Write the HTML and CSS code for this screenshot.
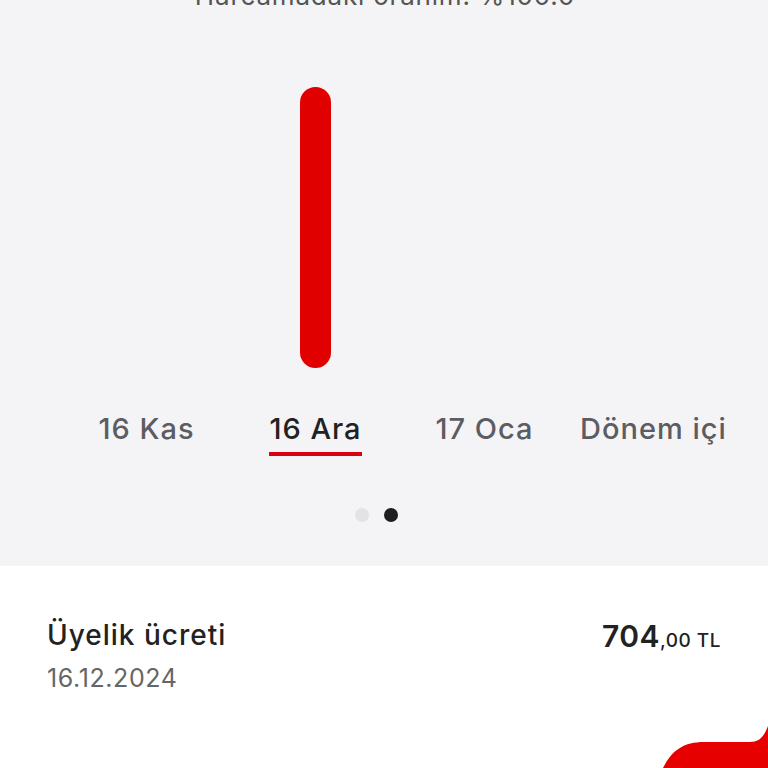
FILE: index.html
```html
<!DOCTYPE html>
<html lang="tr">
<head>
    <meta charset="UTF-8">
    <meta name="viewport" content="width=device-width, initial-scale=1.0">
    <title>Harcama</title>
    <link rel="stylesheet" href="styles.css">
</head>
<body>
    <section class="summary">
        <p class="ratio">Harcamadaki oranım: %100.0</p>

        <div class="chart">
            <div class="col"><div class="bar-slot"></div><span class="label">16 Kas</span></div>
            <div class="col active"><div class="bar-slot"><div class="bar"></div></div><span class="label">16 Ara</span></div>
            <div class="col"><div class="bar-slot"></div><span class="label">17 Oca</span></div>
            <div class="col"><div class="bar-slot"></div><span class="label">Dönem içi</span></div>
        </div>

        <div class="dots">
            <span class="dot"></span>
            <span class="dot current"></span>
        </div>
    </section>

    <section class="items">
        <div class="item">
            <div class="item-info">
                <h2>Üyelik ücreti</h2>
                <p>16.12.2024</p>
            </div>
            <div class="amount">704<small>,00 TL</small></div>
        </div>
    </section>

    <svg class="fab" width="110" height="60" viewBox="0 0 110 60">
        <path d="M5 60 C13 44 24 34 46 34 L92 34 C102 34 106 28 110 18 L110 60 Z" fill="#e60000"/>
    </svg>
</body>
</html>
```

FILE: styles.css
```css
body {
    margin: 0;
    padding: 0;
    font-family: Inter, "Open Sans", sans-serif;
    background-color: #fff;
    color: #222;
    height: 768px;
    overflow: hidden;
    position: relative;
}

.summary {
    background-color: #f4f4f6;
    height: 566px;
    overflow: hidden;
}

.ratio {
    margin: -20px 0 0;
    text-align: center;
    font-size: 26px;
    letter-spacing: 0.8px;
    color: #555;
    padding-left: 2px;
}

.chart {
    display: grid;
    grid-template-columns: repeat(4, 169px);
    padding-left: 62px;
    margin-top: 76px;
}

.col {
    display: flex;
    flex-direction: column;
    align-items: center;
}

.bar-slot {
    height: 281px;
    display: flex;
    align-items: flex-end;
}

.bar {
    width: 31px;
    height: 281px;
    border-radius: 16px;
    background-color: #e00000;
}

.label {
    margin-top: 43px;
    font-size: 29px;
    letter-spacing: 1px;
    font-weight: 500;
    color: #5c5c62;
    padding-bottom: 6px;
    border-bottom: 4px solid transparent;
    white-space: nowrap;
}

.col.active .label {
    color: #222;
    border-bottom-color: #d90012;
}

.dots {
    display: flex;
    justify-content: center;
    gap: 15px;
    margin-top: 52px;
    padding-right: 16px;
}

.dot {
    width: 14px;
    height: 14px;
    border-radius: 50%;
    background-color: #e3e3e6;
}

.dot.current {
    background-color: #1e1e1e;
}

.items {
    padding: 52px 47px 0 47px;
}

.item {
    display: flex;
    justify-content: space-between;
    align-items: flex-start;
}

.item-info h2 {
    margin: 0;
    font-size: 28px;
    letter-spacing: 1px;
    font-weight: 500;
    color: #222;
}

.item-info p {
    margin: 11px 0 0;
    font-size: 25px;
    letter-spacing: 0.6px;
    color: #666;
}

.amount {
    font-size: 30px;
    letter-spacing: 0.5px;
    font-weight: 600;
    color: #222;
}

.amount small {
    font-size: 19px;
    font-weight: 500;
}

.fab {
    position: absolute;
    right: 0;
    bottom: 0;
}
```
